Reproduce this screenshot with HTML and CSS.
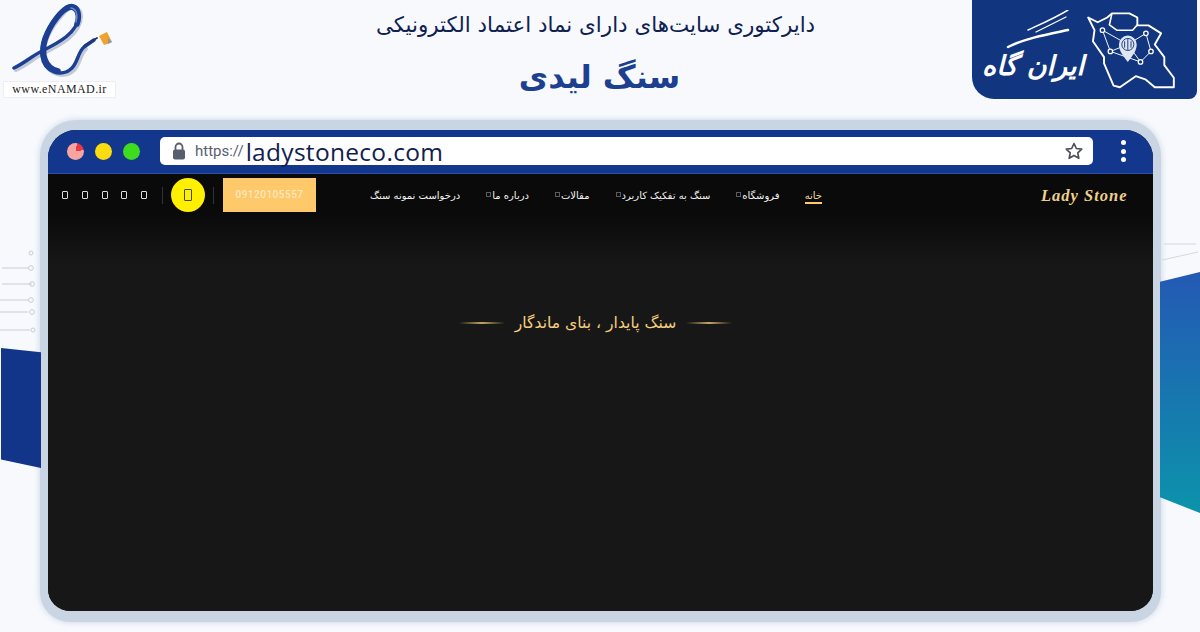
FILE: index.html
```html
<!DOCTYPE html>
<html lang="fa">
<head>
<meta charset="UTF-8">
<meta name="viewport" content="width=device-width, initial-scale=1.0">
<title>سنگ لیدی</title>
<link rel="stylesheet" href="styles.css">
</head>
<body>

<div class="ribbon ribbon-left"></div>
<div class="ribbon ribbon-right"></div>

<svg class="circuit circuit-left" viewBox="0 0 40 100" fill="none" stroke="#c9ced6" stroke-width="1">
<path d="M2 18H28M2 34H32M0 50H28M0 62H28M0 80H30"/>
<circle cx="31" cy="3" r="2"/><circle cx="31" cy="18" r="2.4"/><circle cx="32" cy="34" r="2.4"/>
<circle cx="31" cy="50" r="2.4"/><circle cx="32" cy="62" r="2.4"/><circle cx="33" cy="80" r="2"/>
</svg>
<svg class="circuit circuit-right" viewBox="0 0 40 30" fill="none" stroke="#d3d8df" stroke-width="1">
<path d="M2 20L20 16L38 12M4 4H36"/>
</svg>

<header class="top">
<div class="enamad">
<svg class="enamad-mark" viewBox="3 3 115 75" fill="none" stroke-linecap="round">
<path d="M16 70C28 64 34 58 44 53C60 45 80 35 81 17C81 7 72 4 64 13C52 26 42 42 44 58C46 74 64 80 74 70C80 64 80 54 86 49" stroke="#c3c9d4" stroke-width="4"/>
<path d="M14 68C26 62 32 56 42 51C58 43 78 33 79 15C79 5 70 2 62 11C50 24 40 40 42 56C44 72 62 78 72 68C78 62 78 52 84 47L94 40" stroke="#1c3f94" stroke-width="3.500"/>
<path d="M77 24C80 16 78 7 70 7C62 9 50 24 45 40C41 54 45 68 58 71" stroke="#1c3f94" stroke-width="5.500"/>
<path d="M76 22C78 16 77 9 71 8" stroke="#6f8cc8" stroke-width="1.500"/>
<path d="M85 45L97 38" stroke="#20376f" stroke-width="2"/>
<path d="M99 36L107 32L112 42L104 45Z" fill="#f0a32c" stroke="none"/>
<path d="M108 38L112 42L108 44Z" fill="#8d97a8" stroke="none"/>
</svg>
<div class="enamad-url">www.eNAMAD.ir</div>
</div>

<div class="titles">
<div class="dir-title">دایرکتوری سایت‌های دارای نماد اعتماد الکترونیکی</div>
<h1 class="site-name">سنگ لیدی</h1>
</div>

<div class="brand">
<div class="brand-word">
<svg class="brand-strokes" viewBox="0 0 104 60" fill="none" stroke="#fff" stroke-linecap="round">
<path d="M47 20C60 14 74 8 87 0" stroke-width="1.500"/>
<path d="M55 22C65 17 75 12 85 7" stroke-width="1.200"/>
<path d="M27 37C45 28 68 24 87 20" stroke-width="2.500"/>
</svg>
<span>ایران گاه</span>
</div>
<svg class="brand-map" viewBox="370 20 290 255" fill="none" stroke="#fff" stroke-width="6" stroke-linejoin="round">
<path d="M380 45L410 60L440 45L455 32H510L535 45V70L570 70L610 95L590 130L620 170V195L650 235V265H590L560 240L530 230L480 265L460 260L430 190V170L395 120L400 85Z"/>
<path d="M455 32L447 68L470 85H520L535 68" stroke-width="5"/>
<path d="M425 85L450 152L505 130L562 95L578 152L545 185L505 130M425 85L505 130M450 152L545 185" stroke-width="3"/>
<g fill="#12357f" stroke-width="4">
<circle cx="425" cy="85" r="7"/><circle cx="450" cy="152" r="7"/><circle cx="562" cy="95" r="7"/>
<circle cx="578" cy="152" r="7"/><circle cx="545" cy="185" r="7"/>
</g>
<path d="M505 185C490 165 477 150 477 130A28 28 0 0 1 533 130C533 150 520 165 505 185Z" fill="#dfe6f2" stroke="none"/>
<circle cx="505" cy="130" r="19" fill="#dfe6f2" stroke="#12357f" stroke-width="3"/>
<path d="M505 113V147M495 120V140M515 120V140" stroke="#12357f" stroke-width="3"/>
</svg>
</div>
</header>

<div class="frame">
<div class="browser">
<div class="toolbar">
<div class="lights">
<span class="light red"></span>
<span class="light yellow"></span>
<span class="light green"></span>
</div>
<div class="address">
<svg class="lock" viewBox="0 0 14 18"><path d="M3.500 8V5a3.500 3.500 0 0 1 7 0v3" fill="none" stroke="#575f6e" stroke-width="1.800"/><rect x="1" y="7.500" width="12" height="10" rx="2" fill="#575f6e"/></svg>
<span class="scheme">https://</span><span class="domain">ladystoneco.com</span>
<svg class="star" viewBox="0 0 24 24"><path d="M12 3l2.800 6 6.500.8-4.800 4.400 1.300 6.500L12 17.500l-5.800 3.200 1.300-6.500L2.700 9.800 9.200 9z" fill="none" stroke="#4d5057" stroke-width="2" stroke-linejoin="round"/></svg>
</div>
<div class="kebab"><i></i><i></i><i></i></div>
</div>

<div class="site">
<nav class="site-nav">
<div class="logo">Lady Stone</div>
<div class="menu">
<a class="active" href="#">خانه</a>
<a class="sub" href="#">فروشگاه</a>
<a class="sub" href="#">سنگ به تفکیک کاربرد</a>
<a class="sub" href="#">مقالات</a>
<a class="sub" href="#">درباره ما</a>
<a href="#">درخواست نمونه سنگ</a>
</div>
<div class="actions">
<div class="phone">09120105557</div>
<span class="divider"></span>
<span class="call"><b class="tofu"></b></span>
<span class="divider"></span>
<div class="socials">
<b class="tofu"></b><b class="tofu"></b><b class="tofu"></b><b class="tofu"></b><b class="tofu"></b>
</div>
</div>
</nav>
<div class="slogan">
<span class="rule"></span>
<span class="slogan-text">سنگ پایدار ، بنای ماندگار</span>
<span class="rule"></span>
</div>
</div>
</div>
</div>

</body>
</html>
```

FILE: styles.css
```css
*{box-sizing:border-box}
html,body{height:100%}
body{margin:0;width:1200px;height:632px;overflow:hidden;position:relative;background:#f7f9fd;font-family:"DejaVu Sans",sans-serif}

/* page decoration behind the frame */
.ribbon{position:absolute}
.ribbon-left{left:1px;top:348px;width:40px;height:120px;background:#12358a;clip-path:polygon(0 0,100% 3.500%,100% 100%,0 93%)}
.ribbon-right{left:1160px;top:272px;width:40px;height:241px;background:linear-gradient(#2459b4,#0c93ab);clip-path:polygon(0 4%,100% 0,100% 100%,0 93.500%)}
.circuit{position:absolute}
.circuit-left{left:0;top:250px;width:40px;height:100px}
.circuit-right{left:1160px;top:240px;width:40px;height:30px}

/* top strip */
.top{display:grid;grid-template-columns:372px 1fr 228px;height:120px;position:relative}
.enamad{padding:3px 0 0 3px}
.enamad-mark{display:block;width:115px;height:75px}
.enamad-url{width:113px;height:17px;margin-top:3px;border:1px solid #eceef2;background:#fff;font:12px/15px "Liberation Serif",serif;letter-spacing:.4px;color:#222;text-align:center}

.titles{direction:rtl;text-align:center;padding-right:9px;width:456px}
.dir-title{margin-top:10px;font-size:21.400px;line-height:29px;color:#10214f;white-space:nowrap}
.site-name{margin:16px 0 0;padding-left:8px;font-size:32px;line-height:44px;font-weight:bold;color:#1d3f8f}

.brand{display:flex;align-items:center;justify-content:flex-end;width:225px;height:99px;padding-right:20px;background:#12357f;border-radius:0 0 8px 22px}
.brand-word{position:relative;direction:rtl;width:104px;height:80px;padding-top:36px;color:#fff;font-size:27px;line-height:40px;font-weight:bold;font-style:italic;white-space:nowrap;text-align:center}
.brand-strokes{position:absolute;left:0;top:0;width:104px;height:60px}
.brand-map{width:92px;height:82px;flex:none}

/* browser frame */
.frame{width:1121px;height:502px;margin-left:40px;padding:10px 8px 11px;background:#c9d5e3;border-radius:36px 36px 30px 30px;box-shadow:0 0 6px rgba(190,205,222,.8)}
.browser{height:100%;display:flex;flex-direction:column;border-radius:28px 28px 22px 22px;overflow:hidden;background:#171717}

.toolbar{flex:none;display:flex;align-items:center;height:44px;padding:0 0 1px 19px;background:#12378c;border-bottom:1px solid #2b52a8}
.lights{display:flex;gap:11px;width:93px}
.light{width:17px;height:17px;border-radius:50%}
.red{background:conic-gradient(#f6a5a0 0 3%,#e8384a 3% 22%,#f6a5a0 22%)}
.yellow{background:#fbdc10}
.green{background:#3fdb1e}
.address{flex:1;display:flex;align-items:center;height:28px;border-radius:5px;background:#fff;padding:0 9px 0 12px}
.lock{width:14px;height:18px;margin-right:9px}
.scheme{font:400 15px Roboto,sans-serif;color:#555e6d;margin-right:2px}
.domain{font:500 24.500px "Open Sans",sans-serif;color:#10214f;letter-spacing:.3px}
.star{width:20px;height:20px;margin-left:auto}
.kebab{display:flex;flex-direction:column;align-items:center;gap:3.500px;width:60px}
.kebab i{width:5px;height:5px;border-radius:50%;background:#fff}

.site{flex:1;background:linear-gradient(#0a0a0a 0,#0a0a0a 40px,#171717 90px)}
.site-nav{display:flex;direction:rtl;align-items:center;height:42px;padding:0 26px 0 0;color:#fff}
.logo{direction:ltr;width:86px;margin-top:2px;font:italic bold 16.500px "Liberation Serif",serif;letter-spacing:1px;color:#f0d08c;white-space:nowrap}
.menu{display:flex;margin:3px 219px 0 0;font-size:10px}
.menu a{color:#f1f1f1;text-decoration:none;white-space:nowrap;margin-left:32px}
.menu a.sub{position:relative}
.menu a.sub::after{content:"";position:absolute;left:-6px;top:2px;width:3px;height:3px;border:1px solid #5c5c5c}
.menu a.active{color:#f2d7a1;border-bottom:2px solid #fdc96b;padding-bottom:1px;margin-left:25px}
.menu a:last-child{margin-left:0}
.actions{display:flex;align-items:center;margin-right:auto;padding-left:14px}
.phone{width:93px;height:34px;margin-left:1px;background:#fdc96b;color:#fde8bf;font:500 10px/34px Roboto,sans-serif;letter-spacing:.5px;text-align:center}
.divider{width:1px;height:17px;background:#333;margin:0 8px}
.call{display:flex;align-items:center;justify-content:center;width:34px;height:34px;border-radius:50%;background:#fff000}
.call .tofu{width:8px;height:12px;border-color:#444}
.socials{display:flex;gap:13.750px;margin-right:7px}
.tofu{display:block;width:6px;height:8px;border:1px solid #ddd;border-radius:1px}

.slogan{display:flex;direction:rtl;align-items:center;justify-content:center;gap:10px;margin-top:92px;padding-right:10px;height:30px}
.slogan-text{font-size:15.600px;color:#f6cf7f;white-space:nowrap}
.rule{width:46px;height:2px;background:linear-gradient(90deg,transparent,#c5a661 50%,transparent)}
```
